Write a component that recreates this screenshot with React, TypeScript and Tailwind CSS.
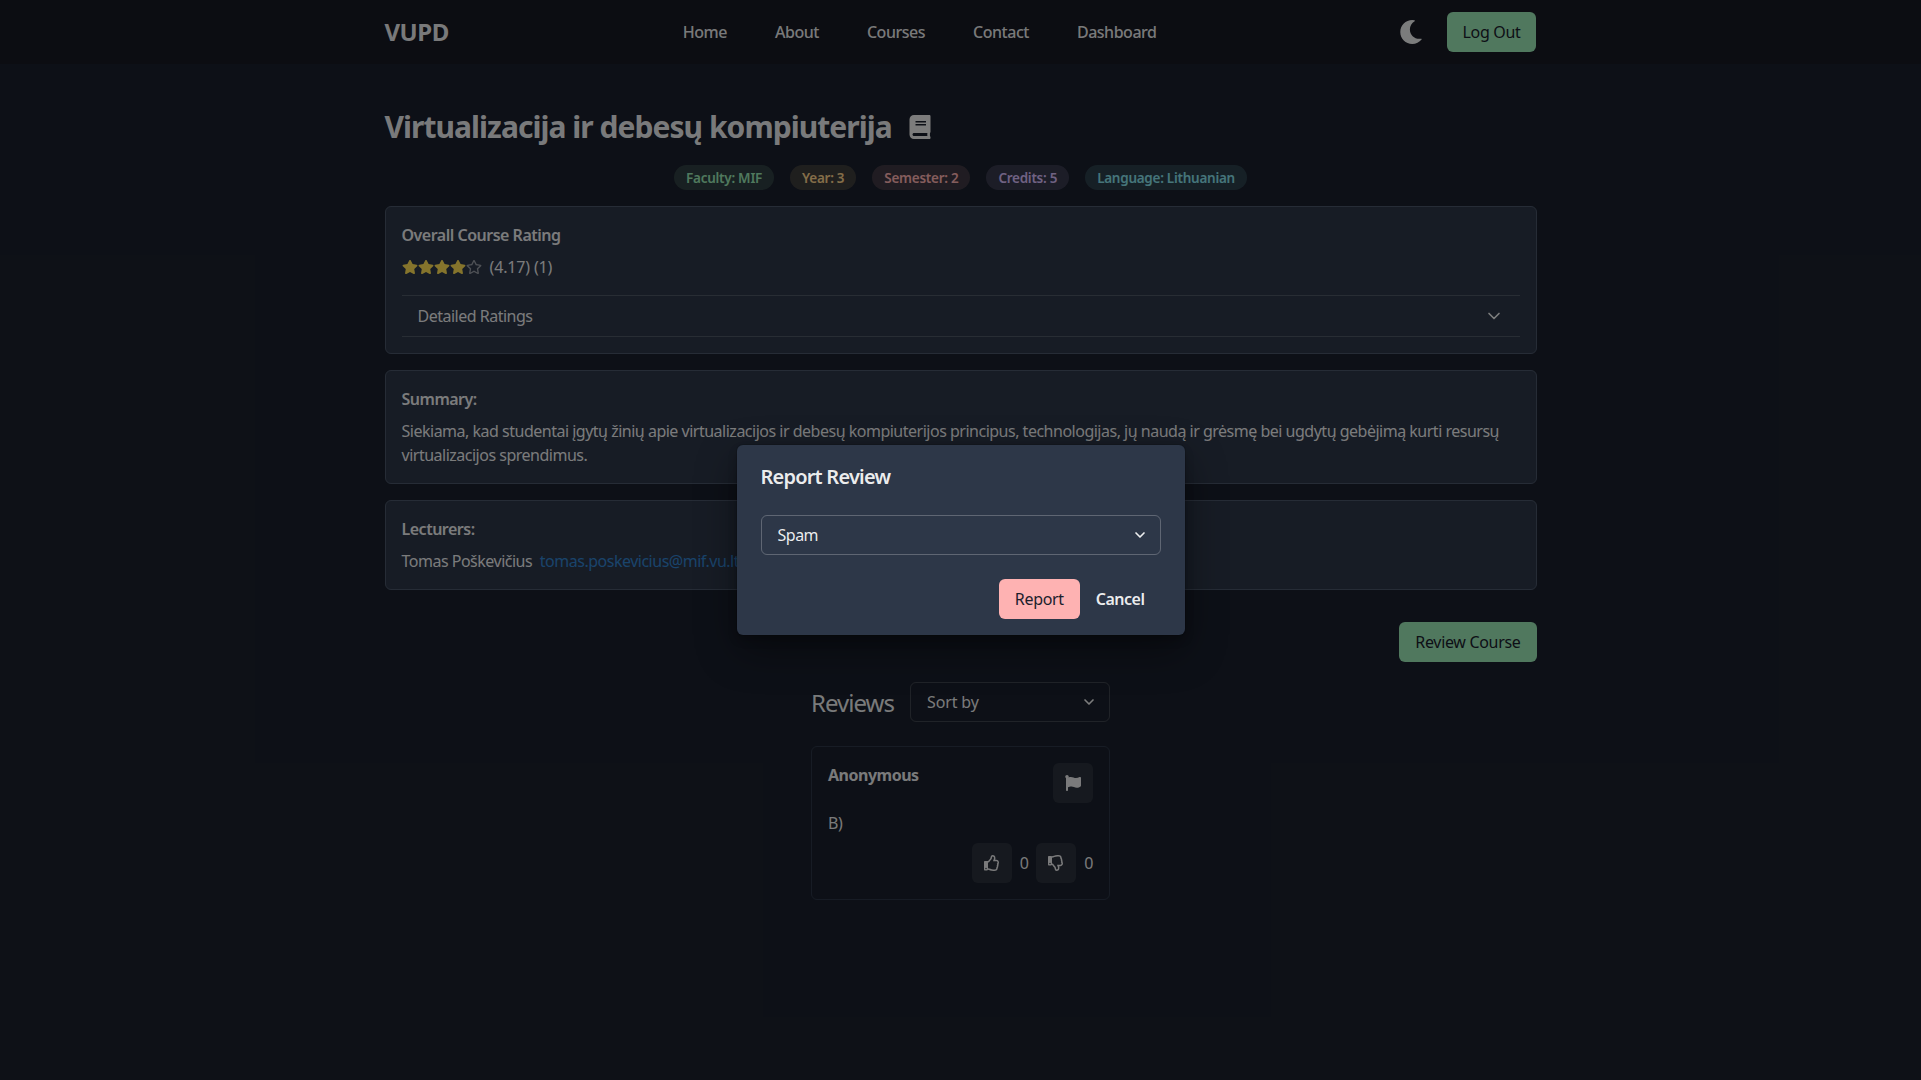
import { ChevronDown } from "lucide-react";
import { FaBook, FaFlag, FaMoon, FaRegStar, FaRegThumbsDown, FaRegThumbsUp, FaStar } from "react-icons/fa";

const navLinks = ["Home", "About", "Courses", "Contact", "Dashboard"];

function Tag({ label, className }: { label: string; className: string }) {
  return (
    <span className={`h-[25px] flex items-center rounded-full px-3 text-[13.5px] tracking-[-0.02em] font-semibold ${className}`}>
      {label}
    </span>
  );
}

function Card({ children }: { children: React.ReactNode }) {
  return <div className="rounded-md border border-[#4a5568] bg-[#2d3748] p-4">{children}</div>;
}

function IconButton({ children }: { children: React.ReactNode }) {
  return (
    <button className="w-10 h-10 flex items-center justify-center rounded-md bg-white/[0.08] text-white/90">
      {children}
    </button>
  );
}

export default function App() {
  return (
    <div className="relative min-h-[1080px] bg-[#1a202c] text-white/[0.92] font-['Noto_Sans',sans-serif] tracking-[-0.031em] text-base leading-6 overflow-hidden">
      {/* Navbar */}
      <nav className="h-16 bg-[#171923]">
        <div className="w-[1152px] h-full mx-auto flex items-center justify-between">
          <span className="text-2xl font-bold tracking-[-0.02em]">VUPD</span>
          <div className="flex items-center gap-12 font-medium tracking-[-0.03em]">
            {navLinks.map((l) => (
              <a key={l}>{l}</a>
            ))}
          </div>
          <div className="flex items-center gap-4">
            <button className="w-10 h-10 flex items-center justify-center">
              <FaMoon size={24} />
            </button>
            <button className="h-10 px-4 rounded-md bg-[#9ae6b4] text-[#1a202c] tracking-[-0.02em]">Log Out</button>
          </div>
        </div>
      </nav>

      <main className="w-[1152px] mx-auto">
        <div className="flex items-center gap-4 mt-[43px] h-10">
          <h1 className="text-3xl font-bold tracking-[-0.032em]">Virtualizacija ir debesų kompiuterija</h1>
          <FaBook size={24} />
        </div>

        <div className="flex justify-center gap-4 mt-[18px] mb-4">
          <Tag label="Faculty: MIF" className="bg-[#9ae6b4]/[0.16] text-[#9ae6b4]" />
          <Tag label="Year: 3" className="bg-[#fbd38d]/[0.16] text-[#fbd38d]" />
          <Tag label="Semester: 2" className="bg-[#feb2b2]/[0.16] text-[#feb2b2]" />
          <Tag label="Credits: 5" className="bg-[#d6bcfa]/[0.16] text-[#d6bcfa]" />
          <Tag label="Language: Lithuanian" className="bg-[#86e0ea]/[0.16] text-[#86e0ea]" />
        </div>

        <div className="flex flex-col gap-4">
          <Card>
            <p className="font-semibold mb-2">Overall Course Rating</p>
            <div className="flex items-center gap-2">
              <div className="flex text-[#ffdf55]">
                <FaStar size={16} />
                <FaStar size={16} />
                <FaStar size={16} />
                <FaStar size={16} />
                <FaRegStar size={16} className="text-white/50" />
              </div>
              <span className="tracking-[-0.01em]">(4.17) (1)</span>
            </div>
            <div className="mt-4 border-y border-white/[0.16] h-[42px] px-4 flex items-center justify-between">
              <span>Detailed Ratings</span>
              <ChevronDown size={20} />
            </div>
          </Card>

          <Card>
            <p className="font-semibold mb-2">Summary:</p>
            <p>
              Siekiama, kad studentai įgytų žinių apie virtualizacijos ir debesų kompiuterijos principus, technologijas,
              jų naudą ir grėsmę bei ugdytų gebėjimą kurti resursų virtualizacijos sprendimus.
            </p>
          </Card>

          <Card>
            <p className="font-semibold mb-2">Lecturers:</p>
            <p>
              Tomas Poškevičius <a className="ml-1 text-[#3182ce]">tomas.poskevicius@mif.vu.lt</a>
            </p>
          </Card>
        </div>

        <div className="flex justify-end mt-8">
          <button className="h-10 px-4 rounded-md bg-[#9ae6b4] text-[#1a202c] tracking-[-0.02em]">Review Course</button>
        </div>

        {/* Reviews */}
        <div className="w-[299px] mx-auto mt-5">
          <div className="flex items-center gap-4">
            <h2 className="text-2xl pt-0.5 tracking-[-0.04em]">Reviews</h2>
            <div className="flex-1 h-10 pl-4 pr-3 rounded-md border border-white/[0.16] flex items-center justify-between">
              <span className="tracking-[-0.01em]">Sort by</span>
              <ChevronDown size={16} strokeWidth={2.5} />
            </div>
          </div>

          <div className="mt-6 rounded-md border border-[#2d3748] p-4">
            <div className="flex justify-between">
              <span className="font-bold">Anonymous</span>
              <IconButton>
                <FaFlag size={16} />
              </IconButton>
            </div>
            <p className="mt-2">B)</p>
            <div className="mt-2 flex items-center justify-end gap-2">
              <IconButton>
                <FaRegThumbsUp size={16} />
              </IconButton>
              <span>0</span>
              <IconButton>
                <FaRegThumbsDown size={16} />
              </IconButton>
              <span>0</span>
            </div>
          </div>
        </div>
      </main>

      {/* Report dialog */}
      <div className="absolute inset-0 bg-black/[0.48] flex items-center justify-center">
        <div className="w-[448px] h-[190px] rounded-md bg-[#2d3748] shadow-[0_0_0_1px_rgba(0,0,0,0.1),0_5px_10px_rgba(0,0,0,0.2),0_15px_40px_rgba(0,0,0,0.4)] px-6 pt-[17px]">
          <h3 className="text-xl font-semibold leading-[30px] tracking-[-0.04em]">Report Review</h3>
          <div className="mt-[23px] h-10 rounded-md border border-white/[0.24] pl-4 pr-3 flex items-center justify-between">
            <span>Spam</span>
            <ChevronDown size={16} strokeWidth={2.5} />
          </div>
          <div className="mt-6 flex justify-end">
            <button className="h-10 px-4 rounded-md bg-[#feb2b2] text-[#1a202c] tracking-[-0.02em]">Report</button>
            <button className="h-10 px-4 font-semibold">Cancel</button>
          </div>
        </div>
      </div>
    </div>
  );
}
